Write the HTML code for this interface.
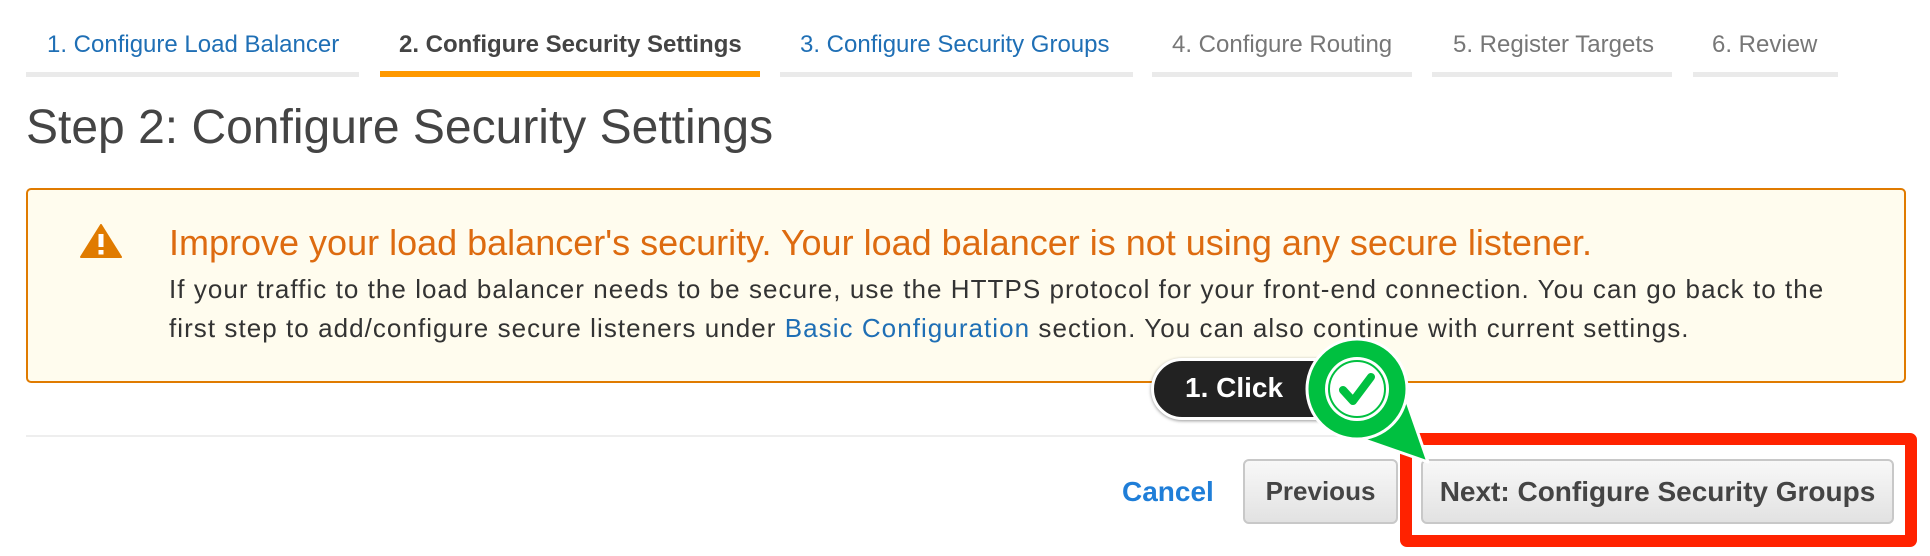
<!DOCTYPE html>
<html><head><style>
body{margin:0;width:1930px;height:556px;background:#fff;font-family:"Liberation Sans",sans-serif;position:relative;overflow:hidden}
.a{position:absolute}
.tab{position:absolute;top:31px;font-size:24px;white-space:nowrap}
.bar{position:absolute;top:72px;height:5px;background:#eaeaea}
.btn{position:absolute;top:459px;height:65px;border:2px solid #c8c8c8;border-radius:6px;background:linear-gradient(#f8f8f8,#e2e2e2);font-weight:bold;font-size:26px;color:#444;box-sizing:border-box;display:flex;align-items:center;justify-content:center}
</style></head><body>
<div class="tab" style="left:47px;color:#1f6fb5">1. Configure Load Balancer</div>
<div class="tab" style="left:399px;color:#444;font-weight:bold">2. Configure Security Settings</div>
<div class="tab" style="left:800px;color:#1f6fb5">3. Configure Security Groups</div>
<div class="tab" style="left:1172px;color:#777">4. Configure Routing</div>
<div class="tab" style="left:1453px;color:#777">5. Register Targets</div>
<div class="tab" style="left:1712px;color:#777">6. Review</div>
<div class="bar" style="left:26px;width:333px"></div>
<div class="bar" style="left:380px;width:380px;background:#f90;top:71px;height:6px"></div>
<div class="bar" style="left:780px;width:353px"></div>
<div class="bar" style="left:1152px;width:260px"></div>
<div class="bar" style="left:1432px;width:240px"></div>
<div class="bar" style="left:1693px;width:145px"></div>
<div class="a" style="left:26px;top:100px;font-size:48px;color:#444">Step 2: Configure Security Settings</div>
<div class="a" style="left:26px;top:188px;width:1880px;height:195px;border:2px solid #e07b00;border-radius:5px;background:#fffcee;box-sizing:border-box"></div>
<svg class="a" style="left:80px;top:224px" width="42" height="34" viewBox="0 0 42 34"><path d="M21 1 L41 33 L1 33 Z" fill="#e07b00" stroke="#e07b00" stroke-width="2" stroke-linejoin="round"/><rect x="18.5" y="10" width="5" height="13" fill="#fff"/><rect x="18.5" y="26" width="5" height="4.5" fill="#fff"/></svg>
<div class="a" style="left:169px;top:222px;font-size:36px;color:#dd6b10;white-space:nowrap">Improve your load balancer's security. Your load balancer is not using any secure listener.</div>
<div class="a" style="left:169px;top:274px;font-size:26px;letter-spacing:1.05px;color:#333;white-space:nowrap">If your traffic to the load balancer needs to be secure, use the HTTPS protocol for your front-end connection. You can go back to the</div>
<div class="a" style="left:169px;top:313px;font-size:26px;letter-spacing:1.05px;color:#333;white-space:nowrap">first step to add/configure secure listeners under <span style="color:#1f6fb5">Basic Configuration</span> section. You can also continue with current settings.</div>
<div class="a" style="left:26px;top:435px;width:1880px;height:2px;background:#eee"></div>
<div class="a" style="left:1122px;top:476px;font-size:28px;font-weight:bold;color:#1f7ed8">Cancel</div>
<div class="btn" style="left:1243px;width:155px">Previous</div>
<div class="btn" style="left:1421px;width:473px;font-size:28px">Next: Configure Security Groups</div>
<div class="a" style="left:1400px;top:433px;width:517px;height:114px;border:12px solid #ff2200;border-radius:7px;box-sizing:border-box"></div>
<div class="a" style="left:1151px;top:358px;width:200px;height:62px;background:#222;border:3px solid #fff;border-radius:31px;box-shadow:0 1px 3px rgba(0,0,0,.4);box-sizing:border-box"></div>
<div class="a" style="left:1185px;top:372px;font-size:28px;font-weight:bold;color:#fff">1. Click</div>
<svg class="a" style="left:1300px;top:335px" width="140" height="135" viewBox="0 0 140 135">
<path d="M104 58 L128 127 L62 104 Z" fill="#00c040" stroke="#fff" stroke-width="3" stroke-linejoin="round"/>
<circle cx="57" cy="54" r="50" fill="#00c040" stroke="#fff" stroke-width="3"/>
<circle cx="57" cy="54" r="32" fill="#fff"/>
<circle cx="57" cy="54" r="28" fill="#fff" stroke="#00c040" stroke-width="2"/>
<path d="M43 55 L53 66 L71 42" fill="none" stroke="#00c040" stroke-width="8" stroke-linecap="round" stroke-linejoin="round"/>
</svg>
</body></html>
